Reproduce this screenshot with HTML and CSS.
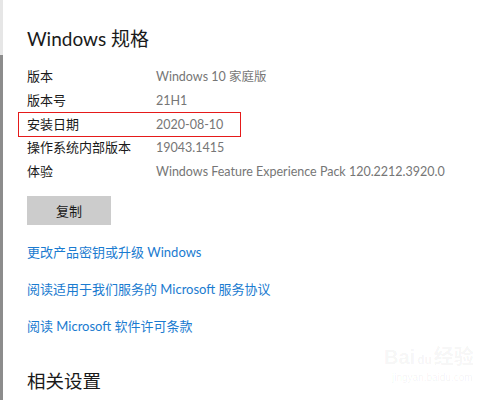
FILE: index.html
```html
<!DOCTYPE html>
<html lang="zh-CN">
<head>
<meta charset="utf-8">
<link rel="stylesheet" href="styles.css">
</head>
<body>
<div class="page">
  <div class="rail"><div class="rail-top"></div><div class="rail-bottom"></div></div>
  <main class="content">
    <h1 class="title">Windows 规格</h1>
    <div class="specs">
      <div class="row"><span class="label">版本</span><span class="value">Windows 10 家庭版</span></div>
      <div class="row"><span class="label">版本号</span><span class="value">21H1</span></div>
      <div class="row marked"><span class="label">安装日期</span><span class="value">2020-08-10</span></div>
      <div class="row"><span class="label">操作系统内部版本</span><span class="value">19043.1415</span></div>
      <div class="row"><span class="label">体验</span><span class="value">Windows Feature Experience Pack 120.2212.3920.0</span></div>
    </div>
    <button class="copy">复制</button>
    <div class="links">
      <a class="link">更改产品密钥或升级 Windows</a>
      <a class="link">阅读适用于我们服务的 Microsoft 服务协议</a>
      <a class="link">阅读 Microsoft 软件许可条款</a>
    </div>
    <h2 class="subtitle">相关设置</h2>
  </main>
  <div class="watermark">
    <div class="wm-main">Bai<span class="wm-du">du</span>经验</div>
    <div class="wm-url">jingyan.baidu.com</div>
  </div>
</div>
</body>
</html>
```
FILE: styles.css
```css
html, body {
  margin: 0;
  padding: 0;
  background: #ffffff;
}
body {
  width: 500px;
  height: 400px;
  overflow: hidden;
  font-family: "Lato", "Noto Sans CJK SC", sans-serif;
}
.page {
  position: relative;
  display: flex;
  height: 400px;
}
.rail {
  display: flex;
  flex-direction: column;
  width: 3px;
  flex: none;
}
.rail-top {
  height: 55px;
  background: #e6e6e6;
}
.rail-bottom {
  flex: 1;
  background: #8c8c8c;
}
.content {
  padding-left: 24px;
  display: flex;
  flex-direction: column;
  align-items: flex-start;
}
.title {
  margin: 25px 0 0 0;
  font-size: 19px;
  line-height: 28px;
  font-weight: 400;
  color: #1a1a1a;
}
.specs {
  margin-top: 12px;
  display: flex;
  flex-direction: column;
}
.row {
  display: flex;
  font-size: 13px;
  line-height: 23.75px;
  position: relative;
}
.label {
  width: 129px;
  color: #1a1a1a;
}
.value {
  color: #767676;
  white-space: nowrap;
  font-size: 12.5px;
}
.marked::after {
  content: "";
  position: absolute;
  left: -9px;
  top: -1px;
  width: 221px;
  height: 23px;
  border: 1px solid #e51a1a;
}
.copy {
  margin-top: 12px;
  width: 84px;
  height: 29px;
  border: none;
  background: #cccccc;
  font-family: "Lato", "Noto Sans CJK SC", sans-serif;
  font-size: 13px;
  color: #1a1a1a;
  padding: 0;
}
.links {
  display: flex;
  flex-direction: column;
  gap: 17px;
  margin-top: 17px;
}
.link {
  font-size: 13px;
  line-height: 20px;
  color: #1a7bd0;
}
.subtitle {
  margin: 32px 0 0 0;
  font-size: 18.5px;
  line-height: 26px;
  font-weight: 400;
  color: #1a1a1a;
}
.watermark {
  position: absolute;
  left: 384px;
  top: 346px;
  color: rgba(0, 0, 0, 0.05);
  font-family: "Liberation Sans", "Noto Sans CJK SC", sans-serif;
}
.wm-main {
  font-size: 20px;
  line-height: 22px;
  font-weight: 700;
}
.wm-du {
  font-size: 12px;
  margin: 0 2px;
}
.wm-url {
  font-size: 10px;
  line-height: 14px;
  padding-left: 8px;
}
```
